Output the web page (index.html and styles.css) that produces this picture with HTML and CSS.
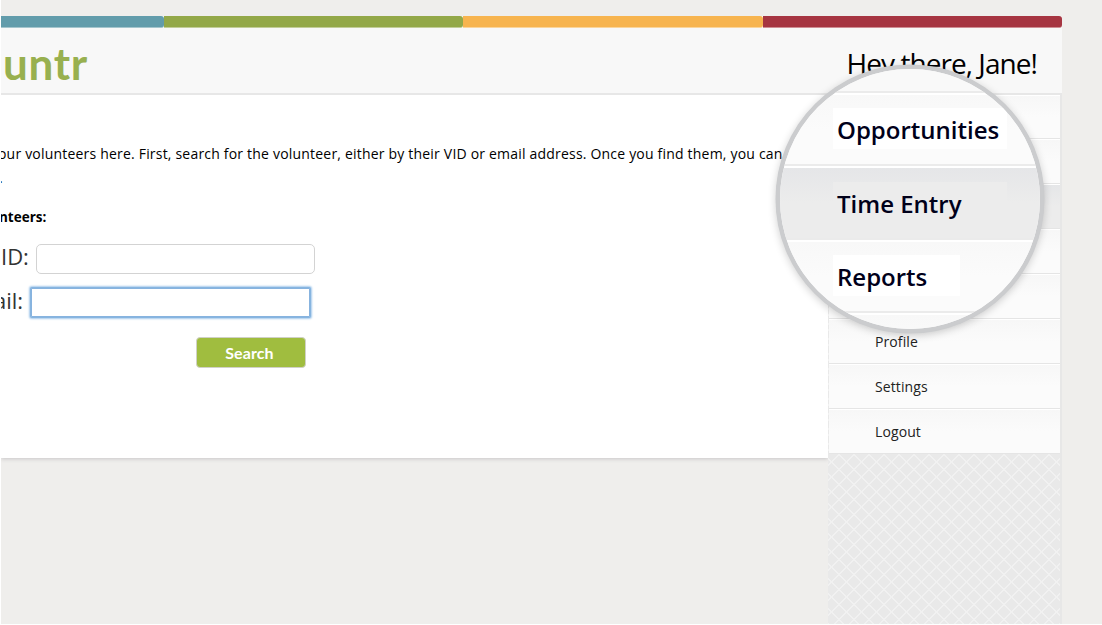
FILE: index.html
```html
<!DOCTYPE html>
<html lang="en">
<head>
<meta charset="utf-8">
<title>Voluntr</title>
<link rel="stylesheet" href="styles.css">
</head>
<body>
<div class="page">
  <div class="stripes"><span class="stripe blue"></span><span class="stripe green"></span><span class="stripe yellow"></span><span class="stripe red"></span></div>
  <header class="header">
    <div class="logo">untr</div>
    <div class="greeting">Hey there, Jane!</div>
  </header>
  <div class="columns">
    <main class="main">
      <p class="intro"><span class="t-intro">our volunteers here. First, search for the volunteer, either by their VID or email address. Once you find them, you can</span></p>
      <p class="intro"><span class="t-dot">.</span></p>
      <h2 class="subhead"><span class="t-sub">nteers:</span></h2>
      <form class="form">
        <div class="field vid"><label for="vid">ID:</label><input id="vid" type="text"></div>
        <div class="field email"><label for="email">ail:</label><input id="email" class="focused" type="text"></div>
        <button class="search" type="button">Search</button>
      </form>
    </main>
    <aside class="sidebar">
      <nav class="menu">
        <a class="item"></a><a class="item"></a><a class="item active"></a><a class="item"></a><a class="item"></a>
        <a class="item">Profile</a><a class="item">Settings</a><a class="item">Logout</a>
      </nav>
    </aside>
  </div>
</div>
<div class="lens">
  <div class="lens-row lens-top"></div>
  <div class="lens-row"><span class="patch wide">Opportunities</span></div>
  <div class="lens-row current"><span class="patch wide">Time Entry</span></div>
  <div class="lens-row"><span class="patch">Reports</span></div>
  <div class="lens-row lens-bottom"></div>
</div>
</body>
</html>
```

FILE: styles.css
```css
* { box-sizing: border-box; }
body {
  margin: 0;
  height: 625px;
  overflow: hidden;
  background: #efeeec;
  border-left: 1px solid #fff;
  border-bottom: 1px solid #fff;
  font-family: "Open Sans", "Noto Sans", sans-serif;
  color: #000;
}
.page {
  width: 1061px;
  height: 624px;
  padding-top: 16px;
  display: flex;
  flex-direction: column;
  overflow: hidden;
}
.stripes { display: flex; height: 12px; background: #f8f8f8; }
.stripe { width: 300px; height: 12px; border-radius: 0 3px 3px 0; border-bottom: 1px solid; }
.blue { width: 163px; background: #629cab; border-color: #a4c5cd; }
.green { background: #93a848; border-color: #c2cd98; width: 299px; }
.yellow { background: #f7b44f; border-color: #fbd59b; }
.red { background: #a63541; border-color: #cf8d93; width: 299px; }
.header {
  height: 67px;
  flex: none;
  display: flex;
  justify-content: space-between;
  background: #f8f8f8;
  border-bottom: 2px solid #e7e7e7;
  padding: 0 25px 0 1px;
}
.logo {
  font: 700 44px/70px Lato, sans-serif;
  letter-spacing: 0.7px;
  padding-left: 1px;
  color: #98b04f;
}
.greeting { font-size: 28px; line-height: 71px; letter-spacing: -0.95px; white-space: nowrap; }
.columns { display: flex; flex: 1; align-items: flex-start; }
.main {
  width: 827px;
  height: 363px;
  padding-top: 47px;
  background: #fff;
  box-shadow: 0 1px 4px #c8c6c8;
  clip-path: inset(0 0 -8px 0);
}
.intro, .subhead { margin: 0; font-size: 14px; line-height: 24px; white-space: nowrap; }
.intro { letter-spacing: 0.197px; }
.t-intro { margin-left: -3px; }
.t-dot { margin-left: -2px; }
.subhead { margin-top: 15px; font-weight: 700; font-size: 13.5px; }
.t-sub { margin-left: -2px; }
.form { margin-top: 15px; }
.field { display: flex; height: 30px; margin-bottom: 13px; font-size: 22px; line-height: 26px; color: #333; }
.vid label { line-height: 25px; }
.field input {
  width: 279px;
  height: 30px;
  margin: 0 0 0 7px;
  border: 1px solid #d3d3d3;
  border-radius: 5px;
  background: #fff;
}
.field .focused {
  width: 279px;
  height: 29px;
  margin-top: 1px;
  margin-left: 8px;
  border: 1px solid #87b3df;
  border-radius: 1px;
  box-shadow: 0 0 0 1px #87b5e0, 0 0 2px 2px #a7cbed;
}
.email label { margin-left: -7px; }
.search {
  display: block;
  width: 110px;
  height: 31px;
  margin: 20px 0 0 195px;
  padding: 0 3px 0 0;
  border: 1px solid #d0d1c7;
  border-radius: 4px;
  background: #a0bd3f;
  color: #fff;
  font: 700 16px/28px Lato, sans-serif;
  letter-spacing: 0.1px;
}
.sidebar {
  width: 234px;
  align-self: stretch;
  border-right: 2px solid #e7e7e7;
  padding-left: 1px;
  background-color: #e9e9e9;
  background-image:
    repeating-linear-gradient(45deg, #f1f1f1 0 1px, transparent 1px 10.6px),
    repeating-linear-gradient(-45deg, #f1f1f1 0 1px, transparent 1px 10.6px);
}
.menu { width: 231px; }
.item {
  display: block;
  height: 45px;
  padding-left: 46px;
  border-top: 1px solid #fff;
  border-bottom: 1px solid #e5e5e5;
  background: linear-gradient(#f7f7f7, #fbfbfb 50%);
  font-size: 14px;
  line-height: 43px;
  letter-spacing: 0.1px;
  color: #222;
}
.item:first-child { height: 44px; }
.item.active { background: linear-gradient(#e5e6e8, #ececec 50%); }
/* Magnifier floating over the menu */
.lens {
  position: absolute;
  left: 776px;
  top: 65px;
  width: 268px;
  height: 268px;
  border: 4px solid #cbccce;
  border-radius: 50%;
  overflow: hidden;
  background: #fafafa;
  box-shadow: 0 0 0 0.5px #cbccce, 0 2px 9px rgba(0, 0, 0, 0.2);
}
.lens-row {
  height: 73px;
  padding: 13px 0 0 53px;
  border-top: 2px solid #fff;
  border-bottom: 2px solid #ebebeb;
  background: linear-gradient(#f8f8f8, #fbfbfb 50%);
}
.lens-top { height: 24px; background: #f9f9f9; border-top: 0; }
.current { height: 74px; padding-top: 14px; background: linear-gradient(#e5e6e8, #ececec 50%); }
.lens-bottom { border-bottom: 0; }
.patch {
  display: inline-block;
  width: 127px;
  height: 41px;
  padding-left: 4px;
  background: #fff;
  font-size: 24px;
  font-weight: 600;
  line-height: 43px;
  color: #00001a;
}
.wide { width: 174px; }
.current .patch { background: #ececec; }
```
